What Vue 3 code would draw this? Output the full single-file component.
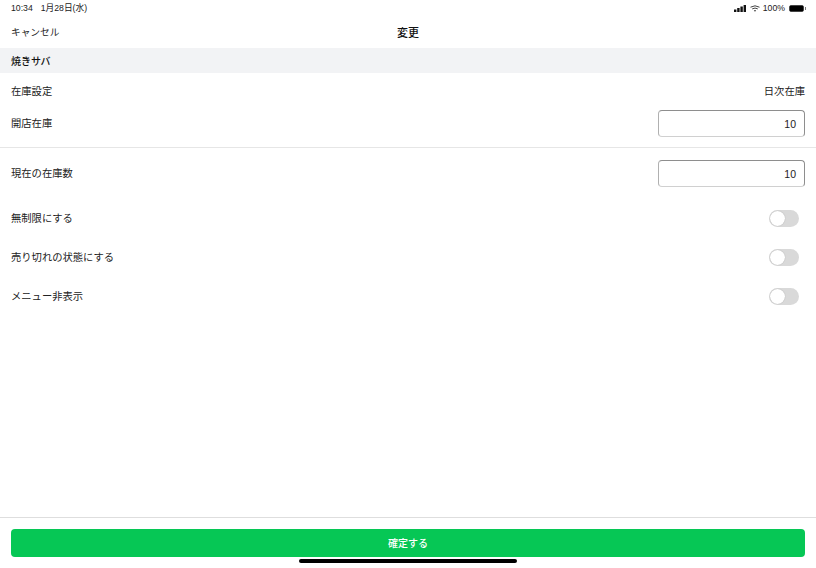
<script setup>
const toggles = [
  { id: 'unlimited', label: '無制限にする' },
  { id: 'soldout', label: '売り切れの状態にする' },
  { id: 'hidden', label: 'メニュー非表示' },
]
</script>

<template>
  <div class="screen">
    <div class="status-bar">
      <div class="status-left">
        <span>10:34</span>
        <span>1月28日(水)</span>
      </div>
      <div class="status-right">
        <svg width="13" height="7" viewBox="0 0 13 7">
          <rect x="0" y="4.5" width="2.4" height="2.5" fill="#111" />
          <rect x="3.2" y="3" width="2.4" height="4" fill="#111" />
          <rect x="6.4" y="1.5" width="2.4" height="5.5" fill="#111" />
          <rect x="9.6" y="0" width="2.4" height="7" fill="#111" />
        </svg>
        <svg class="wifi" width="10" height="7" viewBox="0 0 10 7">
          <path d="M0.5 2.2 Q5 -0.6 9.5 2.2" fill="none" stroke="#444" stroke-width="1" />
          <path d="M2.2 3.9 Q5 2.2 7.8 3.9" fill="none" stroke="#444" stroke-width="1" />
          <path d="M3.8 5.4 L5 6.8 L6.2 5.4 Q5 4.6 3.8 5.4 Z" fill="#444" />
        </svg>
        <span>100%</span>
        <div class="battery"><div class="battery-fill"></div></div>
      </div>
    </div>

    <header class="nav">
      <span class="nav-cancel">キャンセル</span>
      <span class="nav-title">変更</span>
    </header>

    <div class="section-head">焼きサバ</div>

    <main class="content">
      <div class="stock-block">
        <div class="row row-text">
          <span class="label">在庫設定</span>
          <span class="label">日次在庫</span>
        </div>
        <div class="row row-input">
          <span class="label">開店在庫</span>
          <div class="num-input">10</div>
        </div>
      </div>

      <div class="row row-input row-current">
        <span class="label">現在の在庫数</span>
        <div class="num-input">10</div>
      </div>

      <div class="toggle-list">
        <div v-for="item in toggles" :key="item.id" class="row row-toggle">
          <span>{{ item.label }}</span>
          <div class="toggle"><div class="knob"></div></div>
        </div>
      </div>
    </main>

    <footer class="footer">
      <button class="confirm"><span class="label">確定する</span></button>
    </footer>
    <div class="home-bar"></div>
  </div>
</template>

<style scoped>
.screen {
  position: relative;
  width: 816px;
  height: 568px;
  display: flex;
  flex-direction: column;
  background: #fff;
  color: #222;
  font-family: "Noto Sans CJK JP", "Liberation Sans", sans-serif;
  font-size: 10.3px;
  overflow: hidden;
}

.status-bar {
  height: 16px;
  padding: 0 11px 0 11px;
  display: flex;
  justify-content: space-between;
  align-items: center;
  font-family: "Liberation Sans", "Noto Sans CJK JP", sans-serif;
  font-size: 8.7px;
  color: #222;
  flex-shrink: 0;
}

.status-left {
  display: flex;
  align-items: baseline;
  gap: 8px;
  line-height: 12px;
}

.status-right {
  display: flex;
  align-items: center;
  gap: 3px;
}

.battery {
  position: relative;
  width: 15px;
  height: 7px;
  margin-left: 1px;
  margin-right: 1px;
  box-sizing: border-box;
  border-radius: 2px;
  border: 1px solid #444;
}

.battery::after {
  content: "";
  position: absolute;
  right: -3px;
  top: 1px;
  width: 1px;
  height: 3px;
  background: #777;
}

.battery-fill {
  height: 100%;
  background: #000;
}

.nav {
  position: relative;
  height: 32px;
  padding: 0 11px;
  display: flex;
  align-items: center;
  justify-content: center;
  flex-shrink: 0;
}

.nav-cancel {
  position: absolute;
  left: 11px;
  font-size: 9.7px;
  padding-bottom: 1px;
}

.nav-title {
  font-size: 11px;
  font-weight: 500;
  color: #111;
}

.section-head {
  height: 25px;
  padding: 0 11px;
  display: flex;
  align-items: center;
  background: #f2f3f5;
  font-size: 10px;
  font-weight: 500;
  color: #111;
  flex-shrink: 0;
}

.content {
  flex: 1;
}

.label {
  display: inline-block;
  padding-bottom: 2px;
}

.stock-block {
  padding: 8px 0 10px;
  border-bottom: 1px solid #e6e6e6;
}

.row {
  display: flex;
  align-items: center;
  justify-content: space-between;
  padding: 0 11px;
}

.row-text {
  height: 20px;
}

.row-input {
  height: 27px;
  margin-top: 9px;
}

.row-current {
  margin-top: 12px;
}

.num-input {
  width: 147px;
  height: 27px;
  box-sizing: border-box;
  padding-right: 8px;
  display: flex;
  align-items: center;
  justify-content: flex-end;
  border: 1px solid #d0d0d0;
  border-top-color: #8e8e8e;
  border-left-color: #b0b0b0;
  border-right-color: #8e8e8e;
  border-radius: 4px;
  font-family: "Liberation Sans", sans-serif;
  font-size: 10.5px;
  color: #222;
}

.toggle-list {
  margin-top: 12px;
}

.row-toggle {
  height: 39px;
  padding-right: 17px;
}

.row-toggle span {
  padding-bottom: 2px;
}

.toggle {
  width: 30px;
  height: 17px;
  box-sizing: border-box;
  padding: 1px;
  border-radius: 9px;
  background: #d9d9d9;
}

.knob {
  width: 15px;
  height: 15px;
  border-radius: 50%;
  background: #fff;
  box-shadow: 0 0 1px rgba(0, 0, 0, 0.3);
}

.footer {
  height: 51px;
  padding: 11px 11px 0;
  box-sizing: border-box;
  border-top: 1px solid #dedede;
  flex-shrink: 0;
}

.confirm {
  display: block;
  width: 100%;
  height: 28px;
  padding: 0;
  border: none;
  border-radius: 4px;
  background: #06c755;
  color: #fff;
  font-family: inherit;
  font-size: 10px;
  font-weight: 500;
}

.home-bar {
  position: absolute;
  left: 299px;
  bottom: 5px;
  width: 218px;
  height: 4px;
  border-radius: 2px;
  background: #000;
}
</style>
